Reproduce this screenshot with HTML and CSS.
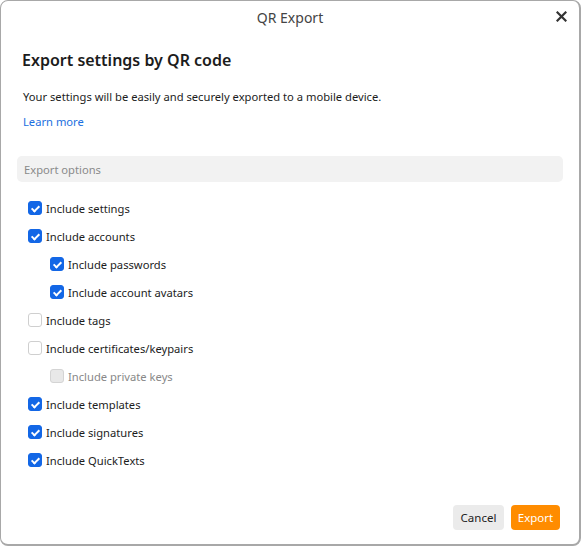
FILE: index.html
```html
<!DOCTYPE html>
<html>
<head>
<meta charset="utf-8">
<link rel="stylesheet" href="styles.css">
</head>
<body>
<div class="dialog">
  <div class="titlebar">
    <span class="title">QR Export</span>
    <span class="close" aria-label="Close">
      <svg width="11" height="11" viewBox="0 0 11 11"><path d="M1.5 1.5 L9.5 9.5 M9.5 1.5 L1.5 9.5" stroke="#333" stroke-width="2.2" stroke-linecap="square"/></svg>
    </span>
  </div>
  <div class="content">
    <h1 class="heading">Export settings by QR code</h1>
    <p class="desc">Your settings will be easily and securely exported to a mobile device.</p>
    <a class="learn" href="#">Learn more</a>
    <div class="section">Export options</div>
    <ul class="options">
      <li class="opt"><span class="cb checked"></span>Include settings</li>
      <li class="opt"><span class="cb checked"></span>Include accounts</li>
      <li class="opt sub"><span class="cb checked"></span>Include passwords</li>
      <li class="opt sub"><span class="cb checked"></span>Include account avatars</li>
      <li class="opt"><span class="cb"></span>Include tags</li>
      <li class="opt"><span class="cb"></span>Include certificates/keypairs</li>
      <li class="opt sub disabled"><span class="cb"></span>Include private keys</li>
      <li class="opt"><span class="cb checked"></span>Include templates</li>
      <li class="opt"><span class="cb checked"></span>Include signatures</li>
      <li class="opt"><span class="cb checked"></span>Include QuickTexts</li>
    </ul>
  </div>
  <div class="footer">
    <button class="btn cancel">Cancel</button>
    <button class="btn export">Export</button>
  </div>
</div>
</body>
</html>
```

FILE: styles.css
```css
html, body {
  margin: 0;
  padding: 0;
  background: #ffffff;
}
body {
  font-family: "Noto Sans", "Open Sans", sans-serif;
  color: #1c1c1c;
}
.dialog {
  width: 581px;
  height: 546px;
  box-sizing: border-box;
  border: 1px solid #a8a8a8;
  border-right-width: 2px;
  border-bottom-width: 2px;
  border-radius: 8px;
  display: flex;
  flex-direction: column;
  background: #fff;
}
.titlebar {
  height: 33px;
  display: flex;
  align-items: center;
  justify-content: center;
  position: relative;
}
.title {
  font-size: 14px;
  color: #444;
}
.close {
  position: absolute;
  right: 12px;
  top: 10px;
  width: 11px;
  height: 11px;
  display: flex;
}
.content {
  padding: 0 16px;
  flex: 1;
}
.heading {
  margin: 14px 0 0 5px;
  font-size: 16px;
  font-weight: 600;
  color: #1c1c1c;
  line-height: 24px;
}
.desc {
  margin: 16px 0 0 6px;
  font-size: 11.2px;
  line-height: 17px;
  color: #1c1c1c;
}
.learn {
  display: inline-block;
  margin: 8px 0 0 6px;
  font-size: 11.2px;
  line-height: 17px;
  color: #1a6fe0;
  text-decoration: none;
}
.section {
  margin-top: 25px;
  height: 26px;
  background: #f2f2f2;
  border-radius: 5px;
  font-size: 11.2px;
  color: #8a8a8a;
  display: flex;
  align-items: center;
  padding-left: 7px;
}
.options {
  list-style: none;
  margin: 12px 0 0 0;
  padding: 0 0 0 11px;
}
.opt {
  height: 28px;
  display: flex;
  align-items: center;
  font-size: 11.2px;
  color: #1c1c1c;
}
.opt.sub {
  padding-left: 22px;
}
.opt.disabled {
  color: #888;
}
.cb {
  width: 14px;
  height: 14px;
  box-sizing: border-box;
  border: 1px solid #cfcfcf;
  border-radius: 3px;
  margin-right: 4px;
  background: #fff;
  position: relative;
}
.cb.checked {
  background: #1367e6;
  border-color: #1367e6;
}
.cb.checked::after {
  content: "";
  position: absolute;
  left: 4px;
  top: 1.5px;
  width: 3px;
  height: 6px;
  border: solid #fff;
  border-width: 0 2px 2px 0;
  transform: rotate(45deg);
}
.disabled .cb {
  background: #e8e8e8;
  border-color: #d4d4d4;
}
.footer {
  display: flex;
  justify-content: flex-end;
  gap: 7px;
  padding: 0 19px 14px 0;
}
.btn {
  font-family: inherit;
  font-size: 11.5px;
  height: 25px;
  border: none;
  border-radius: 4px;
  padding: 0;
  cursor: pointer;
}
.cancel {
  background: #ebebeb;
  color: #222;
  width: 51px;
}
.export {
  background: #ff8c00;
  color: #fff;
  width: 49px;
}
```
